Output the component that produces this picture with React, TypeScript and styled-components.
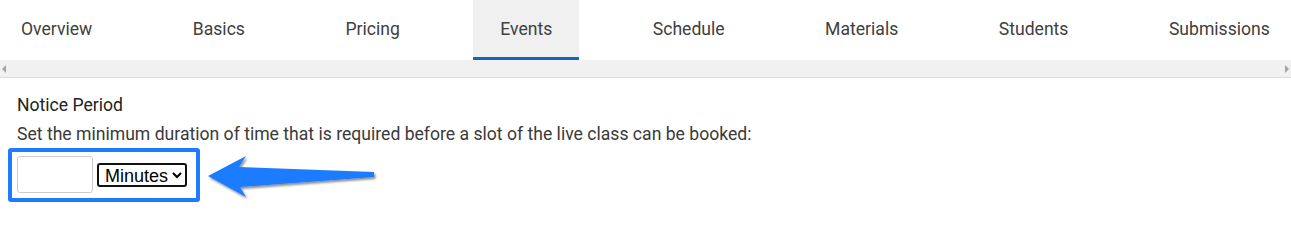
import React, { useState } from "react";
import styled, { createGlobalStyle } from "styled-components";

const tabs = [
	"Overview",
	"Basics",
	"Pricing",
	"Events",
	"Schedule",
	"Materials",
	"Students",
	"Submissions",
];

const GlobalStyle = createGlobalStyle`
	html, body {
		margin: 0;
		padding: 0;
		background: #ffffff;
	}
	body {
		font-family: Roboto, "Liberation Sans", Arial, sans-serif;
		color: #333333;
	}
`;

const App = () => {
	const [active, setActive] = useState("Events");

	return (
		<>
			<GlobalStyle />
			<Page>
				<TabBar>
					<TabList>
						{tabs.map((tab) => (
							<Tab
								key={tab}
								$active={tab === active}
								onClick={() => setActive(tab)}
							>
								{tab}
							</Tab>
						))}
					</TabList>
					<ScrollTrack>
						<ScrollArrow $dir="left" />
						<ScrollArrow $dir="right" />
					</ScrollTrack>
				</TabBar>

				<Content>
					<Label>Notice Period</Label>
					<Hint>
						Set the minimum duration of time that is required before
						a slot of the live class can be booked:
					</Hint>
					<FieldRow>
						<Highlight>
							<NumberInput type="text" />
							<UnitSelect defaultValue="minutes">
								<option value="minutes">Minutes</option>
								<option value="hours">Hours</option>
								<option value="days">Days</option>
							</UnitSelect>
						</Highlight>
						<Arrow width="172" height="48" viewBox="0 0 172 48">
							<defs>
								<filter id="arrowShadow" x="-10%" y="-20%" width="130%" height="160%">
									<feDropShadow dx="1.5" dy="2" stdDeviation="1.2" floodColor="#000" floodOpacity="0.45" />
								</filter>
							</defs>
							<polygon
								points="2,24 40,4 33,15 168,20 168,25 34,35 40,45"
								fill="#1f7bff"
								filter="url(#arrowShadow)"
							/>
						</Arrow>
					</FieldRow>
				</Content>
			</Page>
		</>
	);
};

const Page = styled.div`
	width: 1291px;
	height: 206px;
	overflow: hidden;
`;

const TabBar = styled.nav`
	width: 100%;
	overflow: hidden;
	border-bottom: 1px solid #dcdcdc;
`;

const TabList = styled.ul`
	list-style: none;
	margin: 0 0 0 -6px;
	padding: 0;
	width: calc(100% + 12px);
	display: flex;
	justify-content: space-between;
`;

const Tab = styled.li<{ $active: boolean }>`
	height: 57px;
	padding: 0 27px;
	display: flex;
	align-items: center;
	font-size: 17.6px;
	color: #404040;
	cursor: pointer;
	white-space: nowrap;
	background: ${(p) => (p.$active ? "#f0f0f0" : "transparent")};
	border-bottom: 3px solid ${(p) => (p.$active ? "#1565c0" : "transparent")};
`;

const ScrollTrack = styled.div`
	height: 17px;
	background: #f1f1f1;
	display: flex;
	align-items: center;
	justify-content: space-between;
	padding: 0 2px;
`;

const ScrollArrow = styled.span<{ $dir: "left" | "right" }>`
	width: 0;
	height: 0;
	border-top: 4px solid transparent;
	border-bottom: 4px solid transparent;
	${(p) =>
		p.$dir === "left"
			? "border-right: 4px solid #a3a3a3;"
			: "border-left: 4px solid #a3a3a3;"}
`;

const Content = styled.section`
	padding: 15px 0 0 17px;
`;

const Label = styled.div`
	font-size: 17.6px;
	line-height: 24px;
	color: #222222;
`;

const Hint = styled.p`
	margin: 5px 0 0;
	font-size: 17.6px;
	line-height: 24px;
	color: #3a3a3a;
`;

const FieldRow = styled.div`
	display: flex;
	align-items: center;
	margin: 2px 0 0 -9px;
`;

const Highlight = styled.div`
	display: flex;
	align-items: center;
	gap: 4px;
	padding: 4px 9px 5px 5px;
	border: 4px solid #1f7bff;
	border-radius: 3px;
`;

const NumberInput = styled.input`
	width: 76px;
	height: 37px;
	box-sizing: border-box;
	border: 1px solid #cccccc;
	border-radius: 3px;
	padding: 0 6px;
	font-size: 16px;
	outline: none;
`;

const UnitSelect = styled.select`
	height: 24px;
	font-family: "Liberation Sans", Arial, sans-serif;
	font-size: 18px;
	color: #000000;
	background: #ffffff;
	border: 2px solid #111111;
	border-radius: 3px;
	padding: 0 0 0 2px;
`;

const Arrow = styled.svg`
	margin: 2px 0 0 6px;
	flex-shrink: 0;
`;

export default App;
